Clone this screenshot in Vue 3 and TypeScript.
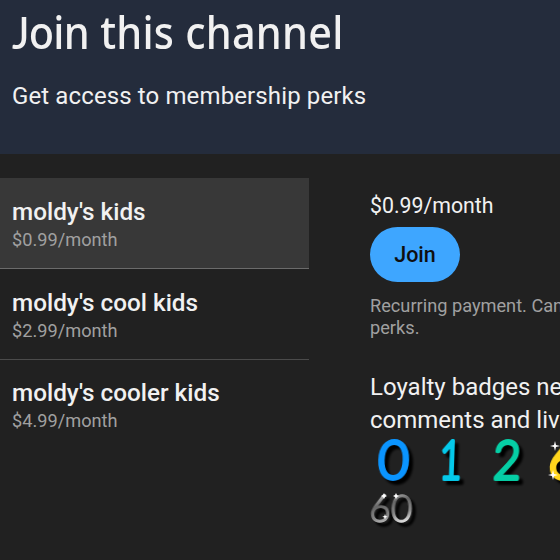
<script setup lang="ts">
import { ref } from 'vue'

interface Tier { name: string; price: string }
interface Badge { label: string; tone: string; x: number; y: number; size: number; width: number }

const tiers: Tier[] = [
  { name: "moldy's kids", price: '$0.99/month' },
  { name: "moldy's cool kids", price: '$2.99/month' },
  { name: "moldy's cooler kids", price: '$4.99/month' },
]
const selected = ref(0)

const badges: Badge[] = [
  { label: '0', tone: 'blue', x: 9, y: 42, size: 54, width: 31 },
  { label: '1', tone: 'cyan', x: 12, y: 42, size: 54, width: 23 },
  { label: '2', tone: 'teal', x: 8, y: 42, size: 54, width: 28 },
  { label: '6', tone: 'gold', x: 5, y: 42, size: 54, width: 32 },
  { label: '60', tone: 'silver', x: 0, y: 29, size: 38, width: 43 },
]
</script>

<template>
  <main class="page">
    <header class="hero">
      <h1 class="title"><span class="initial">J</span><span class="tight">oin</span> this channel</h1>
      <p class="subtitle">Get access to membership perks</p>
    </header>
    <div class="content">
      <nav class="tiers">
        <button
          v-for="(tier, i) in tiers"
          :key="tier.name"
          class="tier"
          :class="{ active: i === selected }"
          @click="selected = i"
        >
          <span class="name">{{ tier.name }}</span>
          <span class="cost">{{ tier.price }}</span>
        </button>
      </nav>
      <section class="details">
        <div class="price">$0.99/month</div>
        <button class="join">Join</button>
        <p class="note">Recurring payment. Can<br />perks.</p>
        <p class="perk">Loyalty badges ne<br />comments and liv</p>
        <div class="badges">
          <svg v-for="b in badges" :key="b.label" class="badge" :class="b.tone" viewBox="0 0 48 52">
            <defs>
              <linearGradient id="silver" x1="0" y1="0" x2="0.25" y2="1">
                <stop offset="0" stop-color="#999" />
                <stop offset="0.25" stop-color="#ccc" />
                <stop offset="0.5" stop-color="#666" />
                <stop offset="0.75" stop-color="#888" />
                <stop offset="1" stop-color="#eee" />
              </linearGradient>
            </defs>
            <text :x="b.x" :y="b.y" :font-size="b.size" :textLength="b.width" lengthAdjust="spacingAndGlyphs">{{ b.label }}</text>
            <g v-if="b.tone === 'gold'" class="sparkle">
              <path d="M11 4l1 4 4 1-4 1-1 4-1-4-4-1 4-1zM9 33l1 4 4 1-4 1-1 4-1-4-4-1 4-1z" />
            </g>
            <g v-if="b.tone === 'silver'" class="glint">
              <path d="M14 0l1 2 2 1-2 1-1 2-1-2-2-1 2-1zM26 0l1 2 2 1-2 1-1 2-1-2-2-1 2-1zM15 21l.7 2 2 .7-2 .7-.7 2-.7-2-2-.7 2-.7z" />
            </g>
          </svg>
        </div>
      </section>
    </div>
  </main>
</template>

<style>
body { margin: 0; background: #212121; overflow: hidden; }
</style>

<style scoped>
.page {
  width: 560px;
  height: 560px;
  overflow: hidden;
  background: #212121;
  color: #f1f1f1;
  font-family: Roboto, "Liberation Sans", sans-serif;
}
h1, p { margin: 0; font-weight: 400; }
button { border: 0; font: inherit; color: inherit; text-align: left; }
.hero { box-sizing: border-box; height: 154px; padding: 4px 12px 0; background: #242c3c; }
.title {
  width: max-content;
  font: 500 45px/56px "Noto Sans", "Open Sans", sans-serif;
  letter-spacing: 0.25px;
  transform: scaleX(0.92);
  transform-origin: left;
}
.initial { font-family: Lato, sans-serif; letter-spacing: -1px; }
.tight { letter-spacing: -0.7px; }
.subtitle { margin-top: 22px; font-size: 24px; line-height: 28px; letter-spacing: 0.12px; white-space: nowrap; }
.content { display: flex; gap: 61px; padding-top: 24px; }
.tiers { flex: none; width: 309px; }
.tier {
  display: flex;
  flex-direction: column;
  box-sizing: border-box;
  width: 100%;
  height: 90.75px;
  padding: 20px 12px 0;
  background: transparent;
  border-bottom: 1px solid #4b4b4b;
}
.tier.active { background: #383838; border-color: #6b6b6b; }
.tier:last-child { padding-top: 19.5px; border-color: transparent; }
.name { font-size: 24.3px; line-height: 28px; font-weight: 500; white-space: nowrap; }
.cost { font-size: 18.2px; line-height: 27px; color: #a0a0a0; }
.details { flex: none; width: 260px; padding-top: 13.5px; }
.price { font-size: 21.3px; line-height: 28px; }
.join {
  display: block;
  width: 90px;
  height: 55px;
  margin-top: 7px;
  padding: 0;
  border-radius: 28px;
  background: #3ea6ff;
  color: #0f0f0f;
  font-size: 21.5px;
  font-weight: 500;
  text-align: center;
}
.note { margin-top: 13px; font-size: 18.2px; line-height: 22px; color: #a0a0a0; white-space: nowrap; }
.perk { margin-top: 32px; font-size: 24px; line-height: 33px; white-space: nowrap; }
.badges { display: flex; flex-wrap: wrap; gap: 4px 10px; width: 240px; }
.badge { width: 48px; height: 52px; overflow: visible; }
.badge text {
  font-family: Lato, sans-serif;
  font-weight: 300;
  stroke-width: 3.8;
  stroke-linejoin: round;
  transform: skewX(-2deg);
  filter: drop-shadow(4px 4px 1px #000);
}
.blue text { fill: #0a94ff; stroke: #0a94ff; }
.cyan text { fill: #04c9ea; stroke: #04c9ea; }
.teal text { fill: #05cea5; stroke: #05cea5; }
.gold text { fill: #ffd51c; stroke: #ffd51c; }
.silver text { fill: url(#silver); stroke: url(#silver); stroke-width: 1.5; }
.sparkle, .glint { fill: #fff; }
</style>
